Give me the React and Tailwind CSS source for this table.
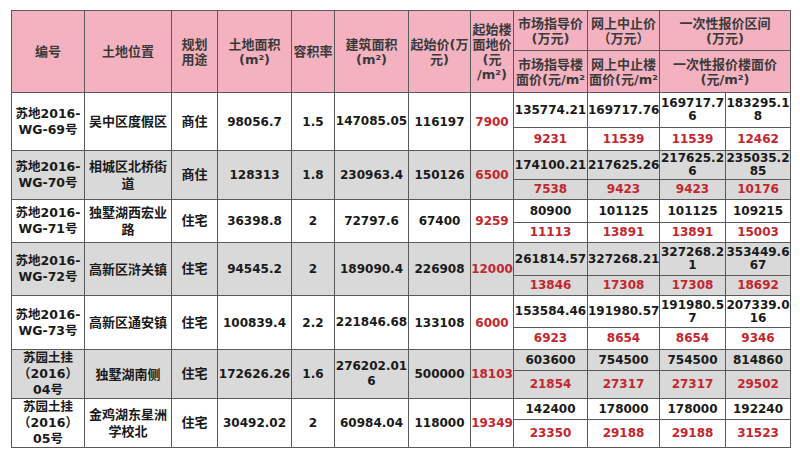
const rows = [
  {
    id: ['苏地2016-', 'WG-69号'],
    loc: ['吴中区度假区'],
    use: '商住',
    area: '98056.7',
    far: '1.5',
    build: ['147085.05'],
    start: '116197',
    floor: '7900',
    top: [['135774.21'], ['169717.76'], ['169717.7', '6'], ['183295.1', '8']],
    bot: ['9231', '11539', '11539', '12462'],
    gray: false,
    h: [35, 23],
  },
  {
    id: ['苏地2016-', 'WG-70号'],
    loc: ['相城区北桥街', '道'],
    use: '商住',
    area: '128313',
    far: '1.8',
    build: ['230963.4'],
    start: '150126',
    floor: '6500',
    top: [['174100.21'], ['217625.26'], ['217625.2', '6'], ['235035.2', '85']],
    bot: ['7538', '9423', '9423', '10176'],
    gray: true,
    h: [29, 20],
  },
  {
    id: ['苏地2016-', 'WG-71号'],
    loc: ['独墅湖西宏业', '路'],
    use: '住宅',
    area: '36398.8',
    far: '2',
    build: ['72797.6'],
    start: '67400',
    floor: '9259',
    top: [['80900'], ['101125'], ['101125'], ['109215']],
    bot: ['11113', '13891', '13891', '15003'],
    gray: false,
    h: [23, 20],
  },
  {
    id: ['苏地2016-', 'WG-72号'],
    loc: ['高新区浒关镇'],
    use: '住宅',
    area: '94545.2',
    far: '2',
    build: ['189090.4'],
    start: '226908',
    floor: '12000',
    top: [['261814.57'], ['327268.21'], ['327268.2', '1'], ['353449.6', '67']],
    bot: ['13846', '17308', '17308', '18692'],
    gray: true,
    h: [33, 20],
  },
  {
    id: ['苏地2016-', 'WG-73号'],
    loc: ['高新区通安镇'],
    use: '住宅',
    area: '100839.4',
    far: '2.2',
    build: ['221846.68'],
    start: '133108',
    floor: '6000',
    top: [['153584.46'], ['191980.57'], ['191980.5', '7'], ['207339.0', '16']],
    bot: ['6923', '8654', '8654', '9346'],
    gray: false,
    h: [32, 22],
  },
  {
    id: ['苏园土挂', '（2016）', '04号'],
    loc: ['独墅湖南侧'],
    use: '住宅',
    area: '172626.26',
    far: '1.6',
    build: ['276202.01', '6'],
    start: '500000',
    floor: '18103',
    top: [['603600'], ['754500'], ['754500'], ['814860']],
    bot: ['21854', '27317', '27317', '29502'],
    gray: true,
    h: [21, 27],
  },
  {
    id: ['苏园土挂', '（2016）', '05号'],
    loc: ['金鸡湖东星洲', '学校北'],
    use: '住宅',
    area: '30492.02',
    far: '2',
    build: ['60984.04'],
    start: '118000',
    floor: '19349',
    top: [['142400'], ['178000'], ['178000'], ['192240']],
    bot: ['23350', '29188', '29188', '31523'],
    gray: false,
    h: [21, 27],
  },
];

const widths = [73, 87, 46, 74, 43, 74, 62, 43, 74, 72, 66, 65];

function Lines({ lines }) {
  return lines.map((l, i) => (
    <span key={i} className="block">
      {l}
    </span>
  ));
}

const cell = 'border border-[#5a5a5a] text-center align-middle p-0 overflow-hidden';
const head = `${cell} text-[#3a3a3a] text-[13px] leading-[15px]`;
const red = 'text-[#c4262e]';

export default function App() {
  return (
    <div
      className="w-[800px] h-[455px] bg-white pt-[10px] pl-[11px] text-[12px] font-bold text-[#1a1a1a]"
      style={{ fontFamily: '"DejaVu Sans", "Noto Sans CJK SC", sans-serif' }}
    >
      <table className="table-fixed border-collapse w-[779px]">
        <colgroup>
          {widths.map((w, i) => (
            <col key={i} style={{ width: w }} />
          ))}
        </colgroup>
        <thead className="bg-[#f4b2c0]">
          <tr>
            <th rowSpan={2} className={head}>编号</th>
            <th rowSpan={2} className={head}>土地位置</th>
            <th rowSpan={2} className={head}>
              <Lines lines={['规划', '用途']} />
            </th>
            <th rowSpan={2} className={head}>
              <Lines lines={['土地面积', '(m²)']} />
            </th>
            <th rowSpan={2} className={`${head} whitespace-nowrap`}>容积率</th>
            <th rowSpan={2} className={head}>
              <Lines lines={['建筑面积', '(m²)']} />
            </th>
            <th rowSpan={2} className={head}>
              <Lines lines={['起始价(万', '元)']} />
            </th>
            <th rowSpan={2} className={head}>
              <Lines lines={['起始楼', '面地价', '(元', '/m²)']} />
            </th>
            <th className={`${head} h-[40px]`}>
              <Lines lines={['市场指导价', '(万元)']} />
            </th>
            <th className={head}>
              <Lines lines={['网上中止价', '（万元）']} />
            </th>
            <th colSpan={2} className={head}>
              <Lines lines={['一次性报价区间', '(万元)']} />
            </th>
          </tr>
          <tr>
            <th className={`${head} h-[42px] whitespace-nowrap`}>
              <Lines lines={['市场指导楼', '面价(元/m²']} />
            </th>
            <th className={`${head} whitespace-nowrap`}>
              <Lines lines={['网上中止楼', '面价(元/m²']} />
            </th>
            <th colSpan={2} className={head}>
              <Lines lines={['一次性报价楼面价', '(元/m²)']} />
            </th>
          </tr>
        </thead>
        <tbody>
          {rows.map((r, i) => {
            const bg = r.gray ? 'bg-[#d9d9d9]' : 'bg-white';
            return [
              <tr key={`${i}a`} className={bg}>
                <td rowSpan={2} className={`${cell} text-[12.5px] leading-[16px]`}>
                  <Lines lines={r.id} />
                </td>
                <td rowSpan={2} className={`${cell} text-[13px] leading-[17px]`}>
                  <Lines lines={r.loc} />
                </td>
                <td rowSpan={2} className={`${cell} text-[13px]`}>{r.use}</td>
                <td rowSpan={2} className={cell}>{r.area}</td>
                <td rowSpan={2} className={cell}>{r.far}</td>
                <td rowSpan={2} className={`${cell} leading-[15px]`}>
                  <Lines lines={r.build} />
                </td>
                <td rowSpan={2} className={cell}>{r.start}</td>
                <td rowSpan={2} className={`${cell} ${red}`}>{r.floor}</td>
                {r.top.map((t, j) => (
                  <td
                    key={j}
                    className={`${cell} leading-[13px] whitespace-nowrap`}
                    style={{ height: r.h[0] }}
                  >
                    <Lines lines={t} />
                  </td>
                ))}
              </tr>,
              <tr key={`${i}b`} className={bg}>
                {r.bot.map((t, j) => (
                  <td
                    key={j}
                    className={`${cell} leading-[13px] ${red}`}
                    style={{ height: r.h[1] }}
                  >
                    {t}
                  </td>
                ))}
              </tr>,
            ];
          })}
        </tbody>
      </table>
    </div>
  );
}
